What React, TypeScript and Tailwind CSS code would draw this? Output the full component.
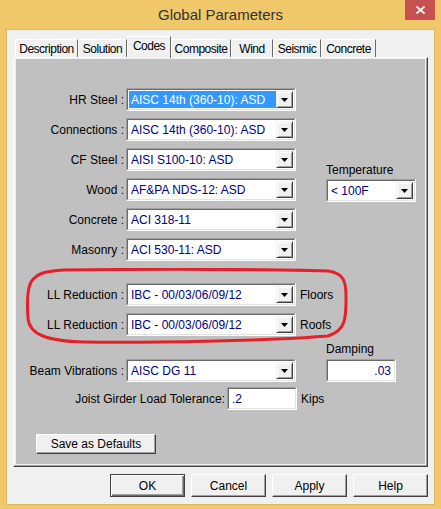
import React from 'react';

const tabs: [string, string][] = [
  ['Description', 'w-[63px]'],
  ['Solution', 'w-[49px]'],
  ['Codes', 'w-[44px]'],
  ['Composite', 'w-[60px]'],
  ['Wind', 'w-[42px]'],
  ['Seismic', 'w-[48px]'],
  ['Concrete', 'w-[55px]'],
];

function Arrow() {
  return (
    <div className="flex h-full w-[17px] items-center justify-center border border-t-[#f0f0f0] border-l-[#f0f0f0] border-r-[#404040] border-b-[#404040] bg-[#f0f0f0] shadow-[inset_1px_1px_0_#ffffff,inset_-1px_-1px_0_#a0a0a0]">
      <svg width="7" height="4" viewBox="0 0 7 4">
        <polygon points="0,0 7,0 3.5,4" fill="#000" />
      </svg>
    </div>
  );
}

function Combo({ value, selected, wide }: { value: string; selected?: boolean; wide?: boolean }) {
  return (
    <div
      className={`flex h-[23px] shrink-0 border border-t-[#a0a0a0] border-l-[#a0a0a0] border-r-white border-b-white ${
        wide ? 'w-[170px]' : 'w-[90px]'
      }`}
    >
      <div className="flex flex-1 border border-t-[#696969] border-l-[#696969] border-r-[#e3e3e3] border-b-[#e3e3e3] bg-white p-[1px]">
        <div className="flex flex-1 items-center overflow-hidden whitespace-nowrap">
          <span
            className={`flex h-full flex-1 items-center pl-[2px] text-[12px] ${
              selected ? 'bg-[#3399ff] text-white' : 'text-[#000080]'
            }`}
          >
            {value}
          </span>
        </div>
        <Arrow />
      </div>
    </div>
  );
}

function Edit({ value, right, w }: { value: string; right?: boolean; w: string }) {
  return (
    <div className={`flex h-[23px] shrink-0 border border-t-[#a0a0a0] border-l-[#a0a0a0] border-r-white border-b-white ${w}`}>
      <div
        className={`flex flex-1 items-center border border-t-[#696969] border-l-[#696969] border-r-[#e3e3e3] border-b-[#e3e3e3] bg-white px-[3px] text-[12px] text-[#000080] ${
          right ? 'justify-end' : ''
        }`}
      >
        {value}
      </div>
    </div>
  );
}

function Row({ label, value, selected, suffix }: { label: string; value: string; selected?: boolean; suffix?: string }) {
  return (
    <div className="flex items-center">
      <span className="w-[108px] shrink-0 whitespace-nowrap text-right text-[12px] text-black">{label}</span>
      <div className="ml-[2px]">
        <Combo value={value} selected={selected} wide />
      </div>
      {suffix && <span className="ml-[4px] text-[12px] text-black">{suffix}</span>}
    </div>
  );
}

function Btn({ children, w, isDefault }: { children: React.ReactNode; w: string; isDefault?: boolean }) {
  return (
    <button
      className={`flex items-center justify-center bg-[#f0f0f0] text-[12px] text-black ${w} ${
        isDefault
          ? 'border border-[#404040] shadow-[inset_1px_1px_0_#ffffff,inset_-1px_-1px_0_#696969,inset_-2px_-2px_0_#a0a0a0]'
          : 'border border-t-white border-l-white border-r-[#404040] border-b-[#404040] shadow-[inset_-1px_-1px_0_#a0a0a0]'
      }`}
    >
      {children}
    </button>
  );
}

export default function App() {
  return (
    <div className="flex h-[509px] w-[441px] flex-col bg-[#f0c86a] font-['Liberation_Sans',Arial,sans-serif]">
      {/* title bar */}
      <div className="relative flex h-[29px] shrink-0 items-center justify-center">
        <span className="pt-[1px] text-[15px] text-[#333333]">Global Parameters</span>
        <div className="absolute right-[6px] top-0 flex h-[20px] w-[30px] items-center justify-center bg-[#c75050]">
          <svg width="9" height="8" viewBox="0 0 9 8">
            <path d="M0.5 0.5 L8.5 7.5 M8.5 0.5 L0.5 7.5" stroke="#fff" strokeWidth="1.8" />
          </svg>
        </div>
      </div>

      {/* client area */}
      <div className="mx-[6px] mb-[4px] flex flex-1 flex-col border border-[#d9b867] bg-[#f0f0f0] px-[6px] pt-[7px]">
        {/* tabs */}
        <div className="flex h-[20px] items-end pl-[2px]">
          {tabs.map(([t, w]) => {
            const sel = t === 'Codes';
            return (
              <div
                key={t}
                className={`flex shrink-0 items-center justify-center border border-b-0 border-t-white border-l-white border-r-[#696969] bg-[#f0f0f0] text-[12px] tracking-[-0.5px] text-black ${w} ${
                  sel ? 'relative z-10 -mb-[1px] h-[22px] pb-[3px]' : 'h-[18px] pt-[1px]'
                }`}
              >
                {t}
              </div>
            );
          })}
        </div>

        {/* tab page */}
        <div className="h-[410px] border border-t-white border-l-white border-r-[#404040] border-b-[#404040] bg-[#f0f0f0] pb-[2px] pl-[2px] pr-[2px] pt-[1px] shadow-[inset_-1px_-1px_0_#a0a0a0]">
          <div className="flex h-full flex-col bg-[#c0c0c0] pt-[29px]">
            <div className="flex">
              <div className="flex flex-col gap-[7px]">
                <Row label="HR Steel :" value="AISC 14th (360-10): ASD" selected />
                <Row label="Connections :" value="AISC 14th (360-10): ASD" />
                <Row label="CF Steel :" value="AISI S100-10: ASD" />
                <Row label="Wood :" value="AF&PA NDS-12: ASD" />
                <Row label="Concrete :" value="ACI 318-11" />
                <Row label="Masonry :" value="ACI 530-11: ASD" />
              </div>
              <div className="ml-[30px] flex flex-col pt-[73px]">
                <span className="text-[12px] text-black">Temperature</span>
                <Combo value="< 100F" />
              </div>
            </div>

            <div className="relative mt-[22px] flex flex-col gap-[7px]">
              <svg
                className="pointer-events-none absolute left-[10px] top-[-15px]"
                width="322"
                height="76"
                viewBox="0 0 322 76"
              >
                <path
                  d="M38 2 C120 1 250 1 302 3 C318 5 320 14 320 28 C320 48 321 62 302 68 C240 73 120 75 58 74 C22 73 3 67 2 50 C1 36 1 22 5 14 C11 5 20 3 38 2 Z"
                  fill="none"
                  stroke="#e5202a"
                  strokeWidth="3"
                />
              </svg>
              <Row label="LL Reduction :" value="IBC - 00/03/06/09/12" suffix="Floors" />
              <Row label="LL Reduction :" value="IBC - 00/03/06/09/12" suffix="Roofs" />
            </div>

            <div className="mt-[4px] flex items-end">
              <Row label="Beam Vibrations :" value="AISC DG 11" />
              <div className="ml-[30px] flex flex-col">
                <span className="mb-[1px] text-[12px] text-black">Damping</span>
                <Edit value=".03" right w="w-[70px]" />
              </div>
            </div>

            <div className="mt-[5px] flex items-center">
              <span className="w-[209px] shrink-0 whitespace-nowrap text-right text-[12px] text-black">
                Joist Girder Load Tolerance:
              </span>
              <div className="ml-[2px]">
                <Edit value=".2" w="w-[70px]" />
              </div>
              <span className="ml-[4px] text-[12px] text-black">Kips</span>
            </div>

            <div className="ml-[20px] mt-[24px] flex">
              <Btn w="h-[20px] w-[120px]">Save as Defaults</Btn>
            </div>
          </div>
        </div>

        {/* bottom buttons */}
        <div className="mt-[7px] flex justify-end gap-[6px]">
          <Btn w="h-[23px] w-[75px]" isDefault>
            OK
          </Btn>
          <Btn w="h-[23px] w-[75px]">Cancel</Btn>
          <Btn w="h-[23px] w-[75px]">Apply</Btn>
          <Btn w="h-[23px] w-[75px]">Help</Btn>
        </div>
      </div>
    </div>
  );
}
